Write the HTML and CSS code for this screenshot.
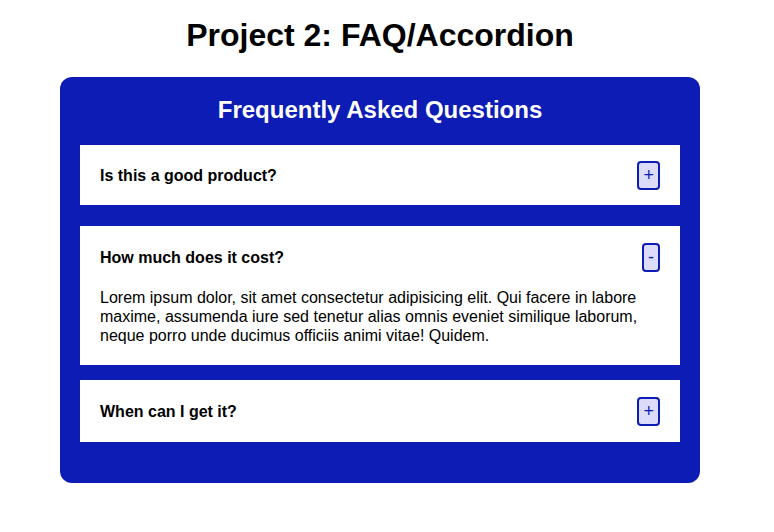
FILE: index.html
```html
<!DOCTYPE html>
<html lang="en">
<head>
<meta charset="utf-8">
<title>Project 2: FAQ/Accordion</title>
<link rel="stylesheet" href="styles.css">
</head>
<body>
<div class="page">
  <h1 class="page-title">Project 2: FAQ/Accordion</h1>
  <section class="faq">
    <h2 class="faq-title">Frequently Asked Questions</h2>
    <div class="faq-item">
      <div class="faq-head">
        <h3 class="faq-q">Is this a good product?</h3>
        <button class="faq-btn">+</button>
      </div>
    </div>
    <div class="faq-item faq-open">
      <div class="faq-head">
        <h3 class="faq-q">How much does it cost?</h3>
        <button class="faq-btn">-</button>
      </div>
      <p class="faq-a">Lorem ipsum dolor, sit amet consectetur adipisicing elit. Qui facere in labore maxime, assumenda iure sed tenetur alias omnis eveniet similique laborum, neque porro unde ducimus officiis animi vitae! Quidem.</p>
    </div>
    <div class="faq-item faq-last">
      <div class="faq-head">
        <h3 class="faq-q">When can I get it?</h3>
        <button class="faq-btn">+</button>
      </div>
    </div>
  </section>
</div>
</body>
</html>
```

FILE: styles.css
```css
* { box-sizing: border-box; }

body {
  margin: 0;
  background: #ffffff;
  font-family: "Liberation Sans", Arial, sans-serif;
  color: #000;
}

.page {
  width: 760px;
  padding-top: 17px;
}

.page-title {
  margin: 0 0 23px;
  text-align: center;
  font-size: 32px;
  font-weight: bold;
  line-height: 37px;
}

.faq {
  width: 640px;
  margin: 0 auto;
  background: #0c1cb5;
  border-radius: 12px;
  padding: 19px 20px 41px;
}

.faq-title {
  margin: 0 0 21px;
  color: #fff;
  text-align: center;
  font-size: 24px;
  line-height: 28px;
}

.faq-item {
  background: #fff;
  padding: 16px 20px 15px;
  margin-bottom: 21px;
}

.faq-open {
  margin-bottom: 15px;
  padding-top: 17px;
  padding-bottom: 20px;
}

.faq-last {
  margin-bottom: 0;
  padding-top: 17px;
  padding-bottom: 16px;
}

.faq-head {
  display: flex;
  align-items: center;
  justify-content: space-between;
}

.faq-q {
  margin: 0;
  font-size: 16px;
  font-weight: bold;
}

.faq-btn {
  height: 29px;
  font-family: "Liberation Sans", Arial, sans-serif;
  font-size: 18px;
  font-weight: normal;
  line-height: 25px;
  padding: 0 4px;
  background: #dcdcfa;
  color: #0c1cb5;
  border: 2px solid #0c1cb5;
  border-radius: 4px;
  cursor: pointer;
}

.faq-a {
  margin: 16px 0 0;
  font-size: 16px;
  line-height: 19px;
}
```
